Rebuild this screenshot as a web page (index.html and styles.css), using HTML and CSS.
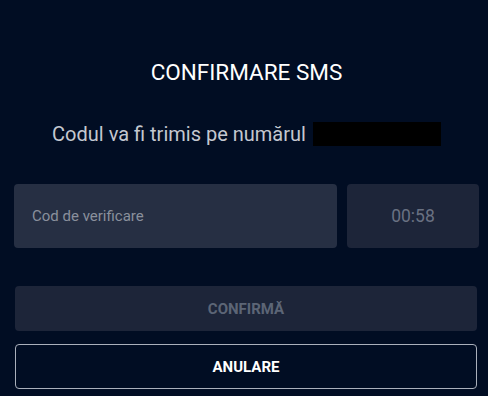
FILE: index.html
```html
<!DOCTYPE html>
<html>
<head>
<meta charset="utf-8">
<link rel="stylesheet" href="styles.css">
</head>
<body>
<div class="modal">
  <h1 class="title">CONFIRMARE SMS</h1>
  <p class="subtitle">Codul va fi trimis pe numărul <span class="redact"></span></p>
  <div class="row">
    <div class="input">Cod de verificare</div>
    <div class="timer">00:58</div>
  </div>
  <div class="btn confirm">CONFIRMĂ</div>
  <div class="btn cancel">ANULARE</div>
</div>
</body>
</html>
```
FILE: styles.css
```css
html, body {
  margin: 0;
  padding: 0;
  background: #010d23;
  font-family: Roboto, "Liberation Sans", sans-serif;
}
.modal {
  width: 488px;
  height: 396px;
  box-sizing: border-box;
  padding: 58px 9px 0 14px;
  display: flex;
  flex-direction: column;
}
.title {
  margin: 0;
  text-align: center;
  font-size: 22.5px;
  font-weight: 400;
  color: #ffffff;
  line-height: 28px;
}
.subtitle {
  margin: 36px 0 0 0;
  font-size: 20px;
  color: #c4c8d0;
  line-height: 24px;
  display: flex;
  justify-content: center;
  align-items: center;
  gap: 7px;
}
.redact {
  display: inline-block;
  width: 128px;
  height: 24px;
  background: #000000;
}
.row {
  margin-top: 38px;
  display: flex;
  gap: 10px;
  height: 64px;
}
.input {
  flex: 0 0 323px;
  background: #262f43;
  border-radius: 4px;
  display: flex;
  align-items: center;
  padding-left: 18px;
  box-sizing: border-box;
  font-size: 15px;
  color: #8a909c;
}
.timer {
  flex: 1;
  background: #1d2539;
  border-radius: 4px;
  display: flex;
  align-items: center;
  justify-content: center;
  font-size: 17.5px;
  color: #697182;
}
.btn {
  margin-left: 1px;
  width: 462px;
  box-sizing: border-box;
  border-radius: 4px;
  display: flex;
  align-items: center;
  justify-content: center;
  font-size: 15px;
  font-weight: 700;
}
.confirm {
  margin-top: 38px;
  height: 45px;
  background: #1d2539;
  color: #5c6576;
}
.cancel {
  margin-top: 13px;
  height: 45px;
  border: 1px solid #aab0bb;
  color: #ffffff;
}
```
